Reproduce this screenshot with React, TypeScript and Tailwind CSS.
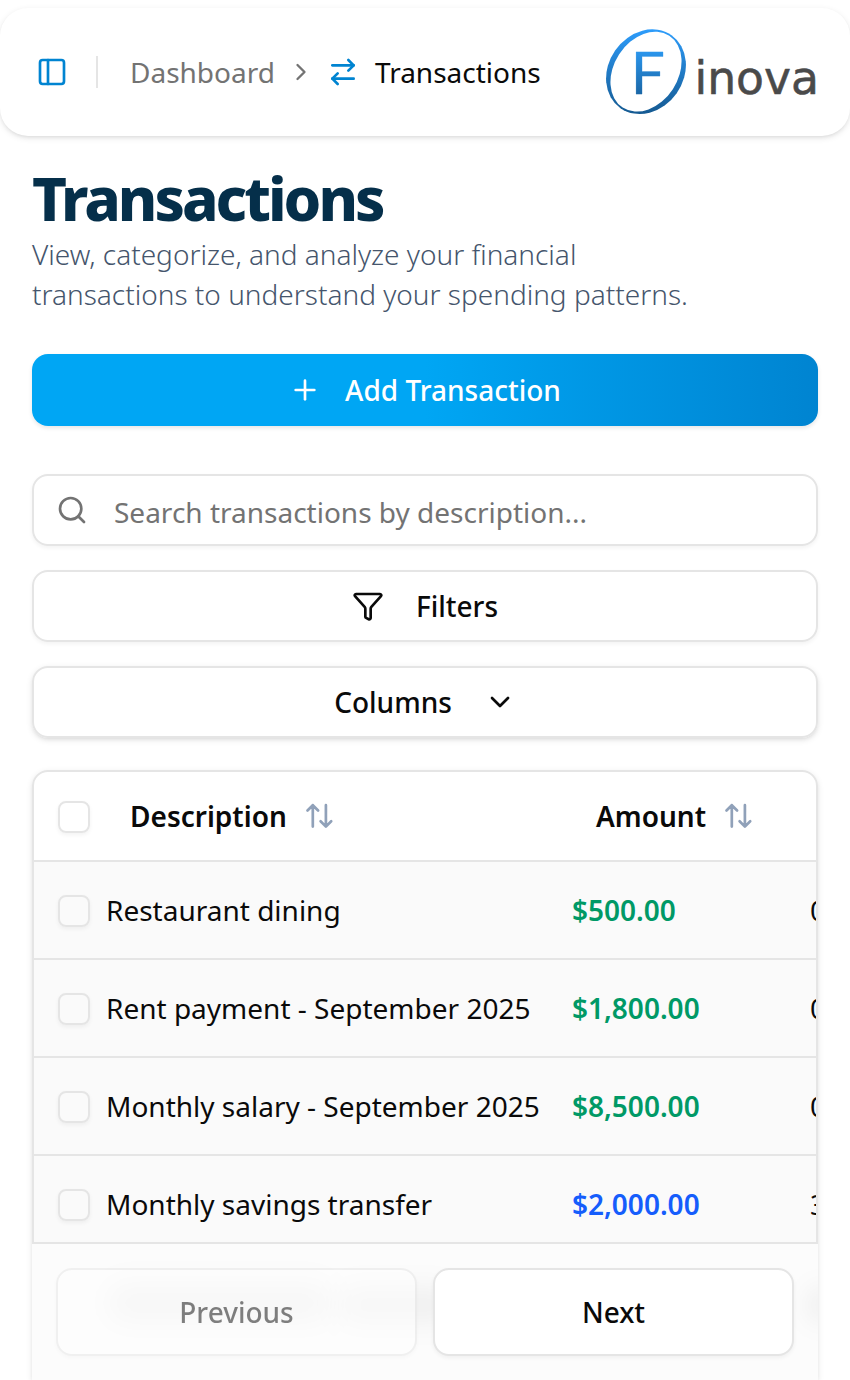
import React from "react";
import { ArrowRightLeft, ChevronDown, ChevronRight, PanelLeft, Plus, Search } from "lucide-react";

const rows = [
  { name: "Restaurant dining", amount: "$500.00", tone: "text-[#009966]", date: "09/30/2025" },
  { name: "Rent payment - September 2025", amount: "$1,800.00", tone: "text-[#009966]", date: "09/01/2025" },
  { name: "Monthly salary - September 2025", amount: "$8,500.00", tone: "text-[#009966]", date: "09/01/2025" },
  { name: "Monthly savings transfer", amount: "$2,000.00", tone: "text-[#155dfc]", date: "31/08/2025" },
];

function Logo() {
  return (
    <svg width="216" height="92" viewBox="0 0 216 92" className="shrink-0" role="img" aria-label="Finova">
      <defs>
        <linearGradient id="ring" gradientUnits="userSpaceOnUse" x1="18" y1="8" x2="68" y2="80">
          <stop offset="0" stopColor="#2e9fff" />
          <stop offset="1" stopColor="#155a92" />
        </linearGradient>
        <linearGradient id="letter" gradientUnits="userSpaceOnUse" x1="0" y1="26" x2="0" y2="69">
          <stop offset="0" stopColor="#2a95ec" />
          <stop offset="1" stopColor="#1a66a5" />
        </linearGradient>
        <mask id="hole" maskUnits="userSpaceOnUse" x="0" y="0" width="216" height="92">
          <rect width="216" height="92" fill="white" />
          <ellipse cx="44" cy="45.7" rx="32" ry="42.8" transform="rotate(33 44 45.7)" fill="black" />
        </mask>
      </defs>
      <g mask="url(#hole)">
        <ellipse cx="44" cy="45.7" rx="37.5" ry="44.5" transform="rotate(35 44 45.7)" fill="url(#ring)" />
      </g>
      <text x="28.5" y="67.7" fontSize="57.5" textLength="34.5" lengthAdjust="spacingAndGlyphs" fontFamily="Lato, sans-serif" fill="url(#letter)" stroke="url(#letter)" strokeWidth="0.3" strokeLinejoin="round">F</text>
      <text x="92.5" y="67.7" fontSize="47" textLength="124.5" lengthAdjust="spacingAndGlyphs" fontFamily="DejaVu Sans, sans-serif" fill="#4a4a4a" stroke="#4a4a4a" strokeWidth="0.6" strokeLinejoin="round">inova</text>
    </svg>
  );
}

function Funnel() {
  return (
    <svg width="32" height="32" viewBox="0 0 24 24" fill="none" stroke="currentColor" strokeWidth="2" strokeLinecap="round" strokeLinejoin="round">
      <path d="M10 20a1 1 0 0 0 .553.895l2 1A1 1 0 0 0 14 21v-7a2 2 0 0 1 .517-1.341L21.74 4.67A1 1 0 0 0 21 3H3a1 1 0 0 0-.742 1.67l7.225 7.989A2 2 0 0 1 10 14z" />
    </svg>
  );
}

function SortIcon() {
  return (
    <svg width="32" height="32" viewBox="0 0 32 32" fill="none" stroke="#90a1b9" strokeWidth="2.7" strokeLinecap="round" strokeLinejoin="round">
      <path d="M4.5 10.5 9.8 5.2l5.3 5.3M9.8 5.2v21.4M17.6 21.3l5.3 5.3 5.3-5.3M22.9 26.6V5.2" />
    </svg>
  );
}

function Box() {
  return <span className="mt-0.5 block size-8 shrink-0 rounded-lg border-2 border-[#e5e5e5] shadow-[0_2px_4px_rgba(0,0,0,0.05)]" />;
}

export default function App() {
  return (
    <div className="flex h-[1380px] w-[850px] flex-col overflow-hidden bg-white pt-2 font-['Noto_Sans',sans-serif] text-[28px] leading-10 text-[#0a0a0a]">
      <header className="flex h-32 shrink-0 items-center rounded-[28px] bg-white pl-9 shadow-[0_2px_6px_rgba(0,0,0,0.1),0_2px_4px_-2px_rgba(0,0,0,0.1)]">
        <PanelLeft size={32} className="text-[#0084d1]" />
        <span className="ml-7 h-8 w-0.5 bg-[#e5e5e5]" />
        <nav className="ml-8 flex items-center">
          <span className="text-[#737373]">Dashboard</span>
          <ChevronRight size={28} className="ml-3 text-[#737373]" />
          <ArrowRightLeft size={32} className="ml-3 text-[#0084d1]" />
          <span className="ml-4">Transactions</span>
        </nav>
        <div className="mr-[32px] ml-auto flex">
          <Logo />
        </div>
      </header>

      <main className="flex min-h-0 grow flex-col px-8 pt-[26px]">
        <h1 className="text-[60px] leading-[72px] font-extrabold tracking-tighter text-[#052f4a]">Transactions</h1>
        <p className="w-[700px] font-light text-[#45556c]">
          View, categorize, and analyze your financial transactions to understand your spending patterns.
        </p>

        <button className="mt-10 flex h-[72px] shrink-0 items-center justify-center gap-6 rounded-2xl bg-linear-to-r from-[#00a6f4] from-50% to-[#0084d1] font-medium text-white shadow-[0_2px_4px_rgba(0,0,0,0.1)]">
          <Plus size={32} />
          Add Transaction
        </button>

        <div className="mt-12 flex h-[72px] shrink-0 items-center rounded-2xl border-2 border-[#e5e5e5] pl-[22px] text-[#737373] shadow-[0_2px_4px_rgba(0,0,0,0.05)]">
          <Search size={32} />
          <span className="mt-1 ml-[26px]">Search transactions by description...</span>
        </div>

        <button className="mt-6 flex h-[72px] shrink-0 items-center justify-center gap-8 rounded-2xl border-2 border-[#e5e5e5] font-medium shadow-[0_2px_4px_rgba(0,0,0,0.05)]">
          <Funnel />
          Filters
        </button>
        <button className="mt-6 flex h-[72px] shrink-0 items-center justify-center gap-8 rounded-2xl border-2 border-[#e5e5e5] font-medium shadow-[0_2px_6px_rgba(0,0,0,0.1),0_2px_4px_-2px_rgba(0,0,0,0.1)]">
          Columns
          <ChevronDown size={32} />
        </button>

        <section className="mt-8 flex min-h-0 grow flex-col rounded-t-2xl shadow-[0_2px_6px_rgba(0,0,0,0.1),0_2px_4px_-2px_rgba(0,0,0,0.1)]">
          <div className="h-[474px] shrink-0 overflow-hidden rounded-t-2xl border-2 border-[#e5e5e5]">
            <div className="flex h-[90px] items-center border-b-2 border-[#e5e5e5] pl-6 font-semibold">
              <Box />
              <div className="ml-10 flex w-[466px] shrink-0 items-center gap-4">
                Description
                <SortIcon />
              </div>
              <div className="flex items-center gap-4">
                Amount
                <SortIcon />
              </div>
            </div>
            {rows.map((row) => (
              <div key={row.name} className="flex h-[98px] items-center border-b-2 border-[#e5e5e5] bg-[#fafafa] pl-6">
                <Box />
                <span className="ml-4 w-[466px] shrink-0 whitespace-nowrap">{row.name}</span>
                <span className={`w-[238px] shrink-0 font-semibold ${row.tone}`}>{row.amount}</span>
                <span className="whitespace-nowrap">{row.date}</span>
              </div>
            ))}
          </div>
          <footer className="relative flex grow items-start gap-4 overflow-hidden bg-[#fcfcfc] px-6 pt-6">
            <span className="absolute top-[40px] left-[75px] h-[38px] w-[225px] rounded-full bg-black/5 blur-[14px]" />
            <span className="absolute top-[44px] left-[305px] h-[34px] w-[120px] rounded-full bg-black/5 blur-[14px]" />
            <span className="absolute top-[42px] left-[775px] h-[38px] w-[30px] rounded-full bg-black/5 blur-[12px]" />
            <button className="relative h-[88px] flex-1 rounded-2xl border-2 border-[#e5e5e5] bg-white font-medium opacity-50 shadow-[0_2px_4px_rgba(0,0,0,0.05)]">
              Previous
            </button>
            <button className="relative h-[88px] flex-1 rounded-2xl border-2 border-[#e5e5e5] bg-white font-medium shadow-[0_2px_4px_rgba(0,0,0,0.05)]">
              Next
            </button>
          </footer>
        </section>
      </main>
    </div>
  );
}
